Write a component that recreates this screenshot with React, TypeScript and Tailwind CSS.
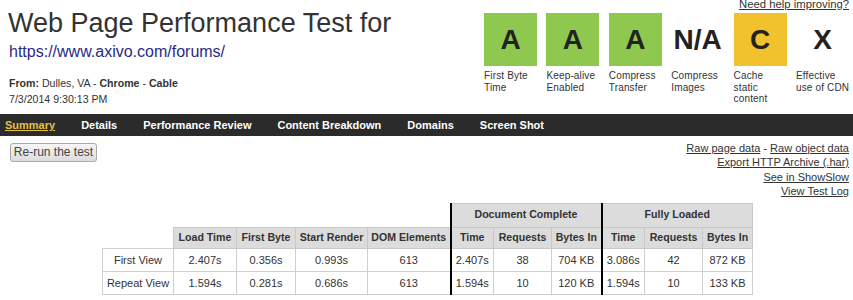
import React from "react";

const grades = [
  { g: "A", bg: "bg-[#8fc84e]", label: ["First Byte", "Time"] },
  { g: "A", bg: "bg-[#8fc84e]", label: ["Keep-alive", "Enabled"] },
  { g: "A", bg: "bg-[#8fc84e]", label: ["Compress", "Transfer"] },
  { g: "N/A", bg: "", label: ["Compress", "Images"] },
  { g: "C", bg: "bg-[#f2c12e]", label: ["Cache", "static", "content"] },
  { g: "X", bg: "", label: ["Effective", "use of CDN"] },
];

const nav = ["Summary", "Details", "Performance Review", "Content Breakdown", "Domains", "Screen Shot"];

const hcell = "bg-[#dcdcdc] border border-[#c8c8c8] font-bold text-[10.6px] p-0 text-center";
const dcell = "bg-white border border-[#cfcfcf] p-0 text-center font-normal";
const thick = "border-l-2 border-l-black";

const rows = [
  ["First View", "2.407s", "0.356s", "0.993s", "613", "2.407s", "38", "704 KB", "3.086s", "42", "872 KB"],
  ["Repeat View", "1.594s", "0.281s", "0.686s", "613", "1.594s", "10", "120 KB", "1.594s", "10", "133 KB"],
];

export default function App() {
  return (
    <div className="w-[853px] h-[300px] overflow-hidden bg-white text-[#333]" style={{ fontFamily: '"Liberation Sans", Arial, sans-serif' }}>
      <div className="flex justify-between h-[114px]">
        <div className="pl-[8px] pt-[7px]">
          <div className="text-[27px] leading-[32px] text-[#333]">Web Page Performance Test for</div>
          <div className="text-[16px] leading-[18px] text-[#2a2a85] mt-[4px] ml-[1px]">https://www.axivo.com/forums/</div>
          <div className="text-[10.6px] leading-[16px] mt-[14px] ml-[1px]">
            <div><span className="font-bold">From:</span> Dulles, VA - <span className="font-bold">Chrome</span> - <span className="font-bold">Cable</span></div>
            <div>7/3/2014 9:30:13 PM</div>
          </div>
        </div>
        <div className="flex flex-col items-end pr-[4px]">
          <a className="text-[11.3px] leading-[13px] mt-[-2px] underline text-[#333]">Need help improving?</a>
          <div className="flex gap-[9.4px] mt-[2px]">
            {grades.map((g, i) => (
              <div key={i} className="w-[53px]">
                <div className={`h-[53px] w-[53px] flex items-center justify-center text-[28px] font-bold text-[#222] ${g.bg}`}>{g.g}</div>
                <div className="mt-[4px] text-[10px] leading-[11.6px] tracking-[0.15px] text-[#333] whitespace-nowrap">
                  {g.label.map((l, j) => (
                    <div key={j}>{l}</div>
                  ))}
                </div>
              </div>
            ))}
          </div>
        </div>
      </div>

      <div className="h-[22px] bg-[#2b2b2b] flex items-center pl-[5px] gap-[26px] text-[11px] font-bold text-white">
        {nav.map((n, i) => (
          <span key={i} className={i === 0 ? "text-[#e3c343] underline" : ""}>{n}</span>
        ))}
      </div>

      <div className="flex justify-between items-start">
        <button className="ml-[10px] mt-[7px] h-[19px] w-[87px] text-[12px] leading-[17px] text-[#444] border border-[#a9a9a9] rounded-[3px] bg-linear-to-b from-[#f7f7f7] to-[#dcdcdc]">
          Re-run the test
        </button>
        <div className="mt-[4.5px] mr-[4px] text-right text-[11px] leading-[14.6px] text-[#333]">
          <div><a className="underline">Raw page data</a> - <a className="underline">Raw object data</a></div>
          <div><a className="underline">Export HTTP Archive (.har)</a></div>
          <div><a className="underline">See in ShowSlow</a></div>
          <div><a className="underline">View Test Log</a></div>
        </div>
      </div>

      <table className="ml-[102px] mt-[4px] border-collapse table-fixed text-[11px] text-[#333]">
        <colgroup>
          <col className="w-[71px]" />
          <col className="w-[63px]" />
          <col className="w-[59px]" />
          <col className="w-[72px]" />
          <col className="w-[83px]" />
          <col className="w-[43px]" />
          <col className="w-[58px]" />
          <col className="w-[50px]" />
          <col className="w-[43px]" />
          <col className="w-[58px]" />
          <col className="w-[50px]" />
        </colgroup>
        <tbody>
          <tr className="h-[24px]">
            <td colSpan={5} className="p-0"></td>
            <th colSpan={3} className={`${hcell} ${thick}`}>Document Complete</th>
            <th colSpan={3} className={`${hcell} ${thick}`}>Fully Loaded</th>
          </tr>
          <tr className="h-[21px]">
            <td className="p-0"></td>
            <th className={hcell}>Load Time</th>
            <th className={hcell}>First Byte</th>
            <th className={hcell}>Start Render</th>
            <th className={hcell}>DOM Elements</th>
            <th className={`${hcell} ${thick}`}>Time</th>
            <th className={hcell}>Requests</th>
            <th className={hcell}>Bytes In</th>
            <th className={`${hcell} ${thick}`}>Time</th>
            <th className={hcell}>Requests</th>
            <th className={hcell}>Bytes In</th>
          </tr>
          {rows.map((r, i) => (
            <tr key={i} className="h-[23px]">
              {r.map((c, j) => (
                <td key={j} className={`${dcell} ${j === 5 || j === 8 ? thick : ""}`}>{c}</td>
              ))}
            </tr>
          ))}
        </tbody>
      </table>
    </div>
  );
}
